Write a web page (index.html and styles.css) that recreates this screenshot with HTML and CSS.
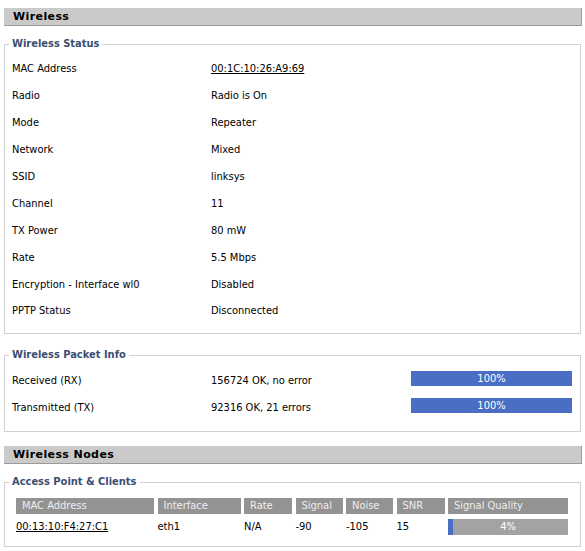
FILE: index.html
```html
<!DOCTYPE html>
<html>
<head>
<meta charset="utf-8">
<title>Wireless</title>
<link rel="stylesheet" href="styles.css">
</head>
<body>
<div class="page">
  <h2 class="bar-title">Wireless</h2>
  <fieldset class="box box-status">
    <legend>Wireless Status</legend>
    <div class="row"><span class="label">MAC Address</span><span class="value"><a href="#" class="mac">00:1C:10:26:A9:69</a></span></div>
    <div class="row"><span class="label">Radio</span><span class="value">Radio is On</span></div>
    <div class="row"><span class="label">Mode</span><span class="value">Repeater</span></div>
    <div class="row"><span class="label">Network</span><span class="value">Mixed</span></div>
    <div class="row"><span class="label">SSID</span><span class="value">linksys</span></div>
    <div class="row"><span class="label">Channel</span><span class="value">11</span></div>
    <div class="row"><span class="label">TX Power</span><span class="value">80 mW</span></div>
    <div class="row"><span class="label">Rate</span><span class="value">5.5 Mbps</span></div>
    <div class="row"><span class="label">Encryption - Interface wl0</span><span class="value">Disabled</span></div>
    <div class="row row-last"><span class="label">PPTP Status</span><span class="value">Disconnected</span></div>
  </fieldset>

  <fieldset class="box box-packet">
    <legend>Wireless Packet Info</legend>
    <div class="row"><span class="label">Received (RX)</span><span class="value value-mid">156724 OK, no error</span><span class="meter"><span class="meter-fill" style="width:100%"></span><span class="meter-text">100%</span></span></div>
    <div class="row"><span class="label">Transmitted (TX)</span><span class="value value-mid">92316 OK, 21 errors</span><span class="meter"><span class="meter-fill" style="width:100%"></span><span class="meter-text">100%</span></span></div>
  </fieldset>

  <h2 class="bar-title bar-nodes">Wireless Nodes</h2>
  <fieldset class="box box-nodes">
    <legend>Access Point &amp; Clients</legend>
    <div class="nodes">
      <div class="th">MAC Address</div>
      <div class="th">Interface</div>
      <div class="th">Rate</div>
      <div class="th">Signal</div>
      <div class="th">Noise</div>
      <div class="th">SNR</div>
      <div class="th">Signal Quality</div>
      <div class="td"><a href="#" class="mac">00:13:10:F4:27:C1</a></div>
      <div class="td">eth1</div>
      <div class="td">N/A</div>
      <div class="td">-90</div>
      <div class="td">-105</div>
      <div class="td">15</div>
      <div class="td"><span class="meter meter-gray"><span class="meter-fill" style="width:4%"></span><span class="meter-text">4%</span></span></div>
    </div>
  </fieldset>
</div>
</body>
</html>
```
FILE: styles.css
```css
html, body {
  margin: 0;
  padding: 0;
  background: #ffffff;
}
body {
  font-family: "DejaVu Sans Condensed", "Liberation Sans", sans-serif;
  font-size: 11px;
  color: #000000;
}
.page {
  margin: 8px 3px 0 4px;
}
.bar-title {
  margin: 0;
  height: 17px;
  line-height: 17px;
  padding-left: 9px;
  background: #cacaca;
  border-bottom: 1px solid #9a9a9a;
  border-right: 1px solid #9a9a9a;
  font-family: "DejaVu Sans", "Liberation Sans", sans-serif;
  font-size: 11px;
  font-weight: bold;
  letter-spacing: 0.4px;
  color: #000000;
}
.box {
  margin: 11px 1px 0 0;
  padding: 4px 4px 9px 4px;
  border: 1px solid #d0d0d0;
  min-width: 0;
}
.box legend {
  padding: 0 3px;
  line-height: 14px;
  font-weight: bold;
  font-size: 11px;
  color: #3a4e72;
}
.box-status {
  padding-bottom: 10px;
}
.box-packet {
  margin-top: 14px;
  padding-top: 5px;
  padding-bottom: 10px;
}
.bar-nodes {
  margin-top: 14px;
}
.box-nodes {
  padding-top: 9px;
  padding-bottom: 11px;
}
.row {
  display: flex;
  align-items: center;
  height: 27px;
  padding-left: 3px;
}
.row-last {
  height: 25px;
}
.label {
  width: 199px;
  flex: none;
}
.value {
  flex: none;
}
.value-mid {
  width: 200px;
}
.mac {
  color: #000000;
  text-decoration: underline;
}
.meter {
  position: relative;
  display: block;
  width: 161px;
  height: 15px;
  background: #ffffff;
  margin-top: -4px;
}
.meter-fill {
  position: absolute;
  left: 0;
  top: 0;
  bottom: 0;
  background: #4a6ec4;
}
.meter-text {
  position: relative;
  display: block;
  text-align: center;
  line-height: 15px;
  color: #ffffff;
}
.nodes {
  display: grid;
  grid-template-columns: 138px 83px 48px 47px 47px 48px 120px;
  column-gap: 3.5px;
  row-gap: 5px;
  margin-left: 7px;
}
.th {
  height: 16px;
  line-height: 16px;
  padding-left: 6px;
  background: #939393;
  color: #eeeeee;
}
.td {
  height: 16px;
  line-height: 16px;
}
.meter-gray {
  width: 120px;
  height: 16px;
  margin-top: 0;
  background: #a3a3a3;
}
.meter-gray .meter-text {
  line-height: 16px;
}
```
